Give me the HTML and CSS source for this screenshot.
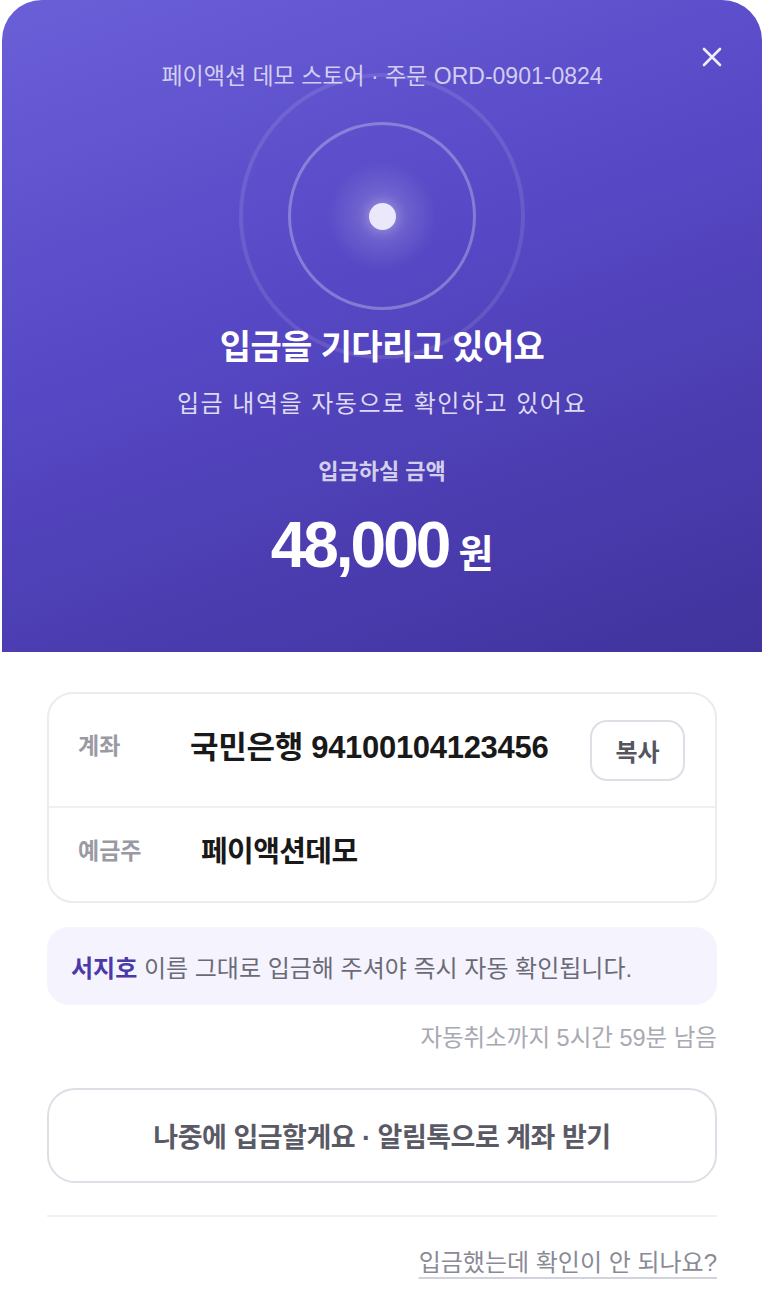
FILE: index.html
```html
<!DOCTYPE html>
<html lang="ko">
<head>
  <meta charset="UTF-8" />
  <meta name="viewport" content="width=device-width, initial-scale=1.0"/>
  <title>입금 대기</title>
  <link rel="stylesheet" href="styles.css">
</head>
<body>

  <div class="sheet">
    <!-- 상단 보라색 영역 -->
    <header class="hero">
      <button class="close-btn" aria-label="닫기">
        <svg width="22" height="22" viewBox="0 0 22 22">
          <path d="M3 3 L19 19 M19 3 L3 19" stroke="currentColor" stroke-width="2.6" stroke-linecap="round"/>
        </svg>
      </button>

      <div class="meta">페이액션 데모 스토어 · 주문 ORD-0901-0824</div>

      <div class="pulse">
        <div class="ring-outer"></div>
        <div class="glow"></div>
        <div class="dot"></div>
      </div>

      <h1 class="title">입금을 기다리고 있어요</h1>
      <p class="subtitle">입금 내역을 자동으로 확인하고 있어요</p>

      <div class="amount-label">입금하실 금액</div>
      <div class="amount">
        <span class="amount-num">48,000</span><span class="amount-unit">원</span>
      </div>
    </header>

    <!-- 계좌 정보 -->
    <main class="body">
      <div class="account-card">
        <div class="row">
          <span class="row-label">계좌</span>
          <span class="row-value">국민은행 94100104123456</span>
          <button class="copy-btn">복사</button>
        </div>
        <div class="row row-owner">
          <span class="row-label">예금주</span>
          <span class="row-value owner">페이액션데모</span>
        </div>
      </div>

      <div class="notice">
        <span><b>서지호</b> 이름 그대로 입금해 주셔야 즉시 자동 확인됩니다.</span>
      </div>

      <div class="timer">자동취소까지 5시간 59분 남음</div>

      <button class="later-btn">나중에 입금할게요 · 알림톡으로 계좌 받기</button>

      <div class="divider"></div>

      <div class="help">
        <a href="#" class="help-link">입금했는데 확인이 안 되나요?</a>
      </div>
    </main>
  </div>

</body>
</html>
```

FILE: styles.css
```css
* {
  box-sizing: border-box;
}

body {
  margin: 0;
  font-family: "Liberation Sans", "Noto Sans CJK KR", sans-serif;
  background-color: #ffffff;
  color: #191919;
}

.sheet {
  margin-left: 2px;
  width: 760px;
}

/* 상단 영역 */
.hero {
  position: relative;
  height: 652px;
  padding-top: 60px;
  border-radius: 40px 40px 0 0;
  background: linear-gradient(160deg, #6b5fd8 0%, #5647c4 45%, #40339c 100%);
  display: flex;
  flex-direction: column;
  align-items: center;
  color: #ffffff;
}

.close-btn {
  position: absolute;
  top: 45px;
  right: 38px;
  width: 24px;
  height: 24px;
  padding: 0;
  border: none;
  background: none;
  color: rgba(255, 255, 255, 0.9);
  display: flex;
  align-items: center;
  justify-content: center;
  cursor: pointer;
}

.meta {
  font-size: 23px;
  line-height: 32px;
  color: rgba(255, 255, 255, 0.72);
  position: relative;
  z-index: 1;
}

.pulse {
  position: relative;
  margin-top: 30px;
  width: 188px;
  height: 188px;
  border-radius: 50%;
  border: 3px solid rgba(255, 255, 255, 0.28);
  display: flex;
  align-items: center;
  justify-content: center;
}

.ring-outer {
  position: absolute;
  top: -52px;
  left: -52px;
  width: 286px;
  height: 286px;
  border-radius: 50%;
  border: 4px solid rgba(255, 255, 255, 0.1);
}

.glow {
  position: absolute;
  width: 110px;
  height: 110px;
  border-radius: 50%;
  background: radial-gradient(circle, rgba(255, 255, 255, 0.22) 0%, rgba(255, 255, 255, 0) 70%);
}

.dot {
  position: relative;
  width: 27px;
  height: 27px;
  border-radius: 50%;
  background-color: #ebe8fb;
  box-shadow: 0 0 14px rgba(255, 255, 255, 0.35);
}

.title {
  margin: 14px 0 0;
  font-size: 34px;
  line-height: 46px;
  font-weight: bold;
  letter-spacing: -0.6px;
}

.subtitle {
  margin: 17px 0 0;
  font-size: 24px;
  line-height: 34px;
  color: rgba(255, 255, 255, 0.82);
  letter-spacing: 1.5px;
}

.amount-label {
  margin-top: 36px;
  font-size: 22px;
  line-height: 30px;
  font-weight: bold;
  color: rgba(255, 255, 255, 0.75);
}

.amount {
  margin-top: 22px;
  display: flex;
  align-items: baseline;
  gap: 10px;
}

.amount-num {
  font-size: 64px;
  line-height: 72px;
  font-weight: bold;
  letter-spacing: -3px;
}

.amount-unit {
  font-size: 38px;
  font-weight: bold;
}

/* 본문 */
.body {
  padding: 40px 45px 0;
}

.account-card {
  border: 2px solid #ebebf0;
  border-radius: 26px;
}

.row {
  display: flex;
  align-items: center;
  height: 112px;
  padding: 0 30px 12px 29px;
}

.row + .row {
  border-top: 2px solid #f0f0f4;
  height: 95px;
}

.row-label {
  width: 112px;
  font-size: 23px;
  font-weight: bold;
  color: #9a9aa5;
}

.row-value {
  flex: 1;
  font-size: 31px;
  font-weight: bold;
  letter-spacing: -0.3px;
  color: #191919;
}

.row-value.owner {
  padding-left: 11px;
  font-size: 29px;
  letter-spacing: -0.6px;
}

.copy-btn {
  width: 95px;
  height: 61px;
  margin-top: 12px;
  border: 2px solid #dedee6;
  border-radius: 17px;
  background: #ffffff;
  font-family: inherit;
  font-size: 24px;
  font-weight: bold;
  color: #55555f;
  cursor: pointer;
}

.notice {
  margin-top: 24px;
  padding: 0 24px;
  height: 78px;
  display: flex;
  align-items: center;
  border-radius: 22px;
  background-color: #f5f3fe;
  font-size: 24px;
  color: #6b6b78;
}

.notice b {
  color: #4a3aa8;
}

.timer {
  margin-top: 17px;
  text-align: right;
  font-size: 23.5px;
  line-height: 32px;
  color: #a9a9b3;
}

.later-btn {
  margin-top: 34px;
  width: 100%;
  height: 95px;
  border: 2px solid #dedee6;
  border-radius: 28px;
  background: #ffffff;
  font-family: inherit;
  font-size: 27px;
  font-weight: bold;
  letter-spacing: -0.5px;
  color: #5a5a66;
  cursor: pointer;
}

.divider {
  margin-top: 32px;
  height: 2px;
  background-color: #f2f2f5;
}

.help {
  margin-top: 29px;
  text-align: right;
}

.help-link {
  font-size: 24px;
  line-height: 34px;
  color: #8a8a96;
  text-decoration: underline;
  text-decoration-color: #d2d2dc;
  text-decoration-thickness: 2px;
  text-underline-offset: 6px;
}
```
